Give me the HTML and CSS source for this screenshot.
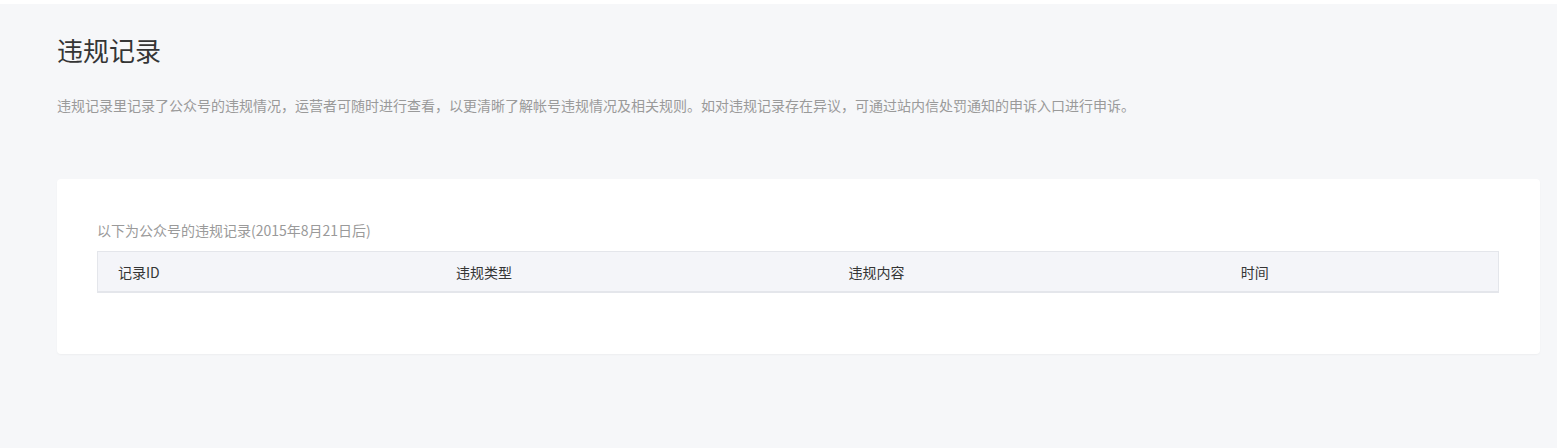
FILE: index.html
```html
<!DOCTYPE html>
<html lang="zh-CN">
  <head>
    <meta charset="UTF-8" />
    <meta name="viewport" content="width=device-width, initial-scale=1.0" />
    <title>违规记录</title>
    <link rel="stylesheet" href="styles.css">
  </head>
  <body>
    <div class="main">
      <div class="page-header">
        <h2 class="page-title">违规记录</h2>
        <p class="page-desc">
          违规记录里记录了公众号的违规情况，运营者可随时进行查看，以更清晰了解帐号违规情况及相关规则。如对违规记录存在异议，可通过站内信处罚通知的申诉入口进行申诉。
        </p>
      </div>
      <div class="card">
        <p class="card-caption">以下为公众号的违规记录(2015年8月21日后)</p>
        <table class="record-table">
          <thead>
            <tr>
              <th class="col-id">记录ID</th>
              <th class="col-type">违规类型</th>
              <th class="col-content">违规内容</th>
              <th class="col-time">时间</th>
            </tr>
          </thead>
          <tbody></tbody>
        </table>
      </div>
    </div>
  </body>
</html>
```
FILE: styles.css
```css
html,
body {
  height: 100%;
}

body {
  margin: 0;
  padding: 4px 6px 0 0;
  box-sizing: border-box;
  background-color: #fff;
  font-family: "Microsoft YaHei", "Noto Sans CJK SC", sans-serif;
  color: #353535;
}

.main {
  height: 100%;
  box-sizing: border-box;
  background-color: #f6f7f9;
  padding: 28px 17px 0 57px;
}

.page-title {
  margin: 0;
  font-size: 26px;
  font-weight: normal;
  line-height: 36px;
  color: #353535;
}

.page-desc {
  margin: 27px 0 0;
  font-size: 14px;
  line-height: 20px;
  color: #9a9a9a;
}

.card {
  margin-top: 64px;
  background-color: #fff;
  border-radius: 4px;
  box-shadow: 0 1px 2px rgba(0, 0, 0, 0.04);
  padding: 41px 41px 61px 40px;
}

.card-caption {
  margin: 0 0 11px;
  font-size: 14px;
  line-height: 20px;
  color: #9a9a9a;
}

.record-table {
  width: 100%;
  border-collapse: collapse;
  table-layout: fixed;
}

.record-table th {
  background-color: #f4f5f9;
  border-top: 1px solid #e4e6eb;
  border-bottom: 2px solid #e4e6eb;
  height: 39px;
  padding: 0 0 0 20px;
  text-align: left;
  font-size: 14px;
  font-weight: normal;
  color: #353535;
}

.record-table th:first-child {
  border-left: 1px solid #e4e6eb;
}

.record-table th:last-child {
  border-right: 1px solid #e4e6eb;
}

.col-id {
  width: 24.1%;
}

.col-type,
.col-content {
  width: 28.2%;
}

.col-time {
  width: 19.5%;
}
```
